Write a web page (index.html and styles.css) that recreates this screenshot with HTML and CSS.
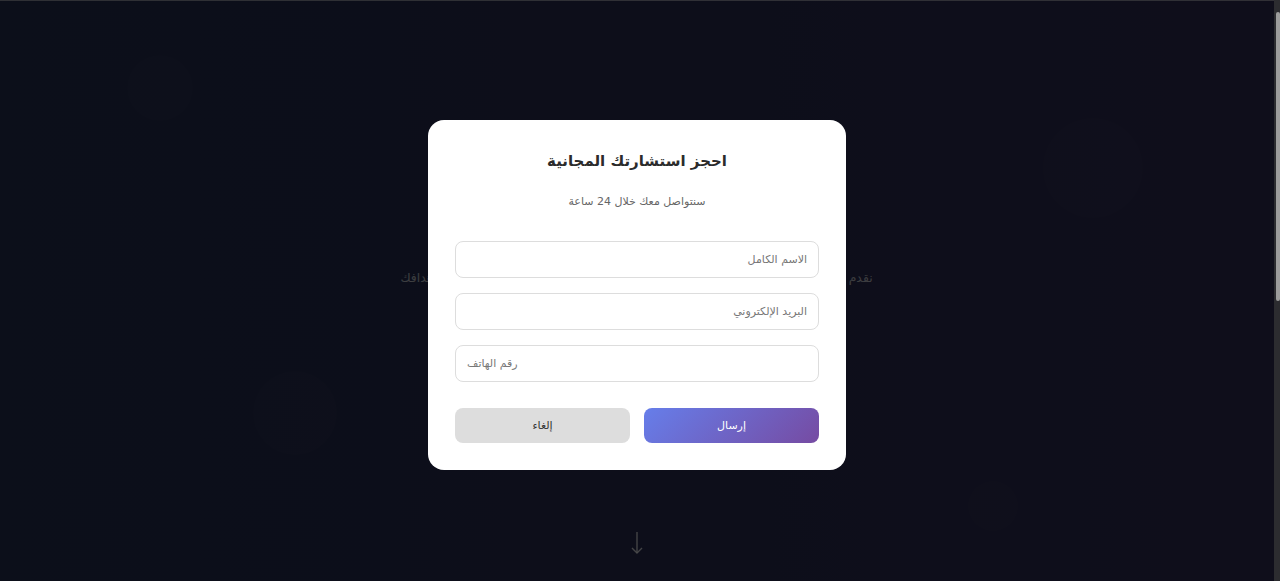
FILE: index.html
```html
<!DOCTYPE html>
<html lang="ar" dir="rtl">
<head>
    <meta charset="UTF-8">
    <meta name="viewport" content="width=device-width, initial-scale=1.0">
    <title>احجز استشارتك المجانية</title>
    <link rel="stylesheet" href="styles.css">
</head>
<body>
    <section class="hero">
        <span class="orb orb-1"></span>
        <span class="orb orb-2"></span>
        <span class="orb orb-3"></span>
        <span class="orb orb-4"></span>

        <div class="hero-content">
            <h1>حلول رقمية لأعمالك</h1>
            <p>نقدم لك حلولاً تقنية مبتكرة ومتكاملة تساعدك على تطوير أعمالك والنمو بثقة وتحقيق أهدافك</p>
        </div>

        <div class="scroll-hint">
            <svg width="14" height="24" viewBox="0 0 14 24" fill="none" stroke="currentColor" stroke-width="1.4">
                <line x1="7" y1="1" x2="7" y2="22"/>
                <polyline points="2,17 7,22 12,17"/>
            </svg>
        </div>
    </section>

    <section class="services"></section>

    <div class="modal-overlay">
        <div class="modal">
            <h2>احجز استشارتك المجانية</h2>
            <p class="modal-subtitle">سنتواصل معك خلال 24 ساعة</p>

            <form class="modal-form">
                <input type="text" placeholder="الاسم الكامل">
                <input type="email" placeholder="البريد الإلكتروني">
                <input type="tel" class="phone" placeholder="رقم الهاتف">

                <div class="modal-actions">
                    <button type="submit" class="btn btn-submit">إرسال</button>
                    <button type="button" class="btn btn-cancel">إلغاء</button>
                </div>
            </form>
        </div>
    </div>

    <div class="page-scroll"><span class="page-scroll-thumb"></span></div>
</body>
</html>
```

FILE: styles.css
```css
* {
    box-sizing: border-box;
}

html {
    background: #283257;
}

body {
    margin: 0;
    font-family: "Segoe UI", Tahoma, "DejaVu Sans", sans-serif;
    color: #fff;
}

.hero {
    position: relative;
    height: 581px;
    border-top: 1px solid rgba(255, 255, 255, 0.55);
    background: linear-gradient(90deg, #283257 0%, #2e3059 60%, #33305c 100%);
    display: flex;
    flex-direction: column;
    align-items: center;
    justify-content: center;
    overflow: hidden;
}

.orb {
    position: absolute;
    border-radius: 50%;
    background: rgba(255, 255, 255, 0.02);
}

.orb-1 { width: 66px; height: 66px; left: 127px; top: 54px; }
.orb-2 { width: 84px; height: 84px; left: 253px; top: 370px; }
.orb-3 { width: 100px; height: 100px; left: 1043px; top: 117px; }
.orb-4 { width: 50px; height: 50px; left: 968px; top: 480px; }

.hero-content {
    text-align: center;
    margin-top: -80px;
    margin-right: 7px;
}

.hero-content h1 {
    margin: 0 0 18px;
    font-size: 30px;
}

.hero-content p {
    margin: 0;
    font-size: 12.4px;
    white-space: nowrap;
    color: rgba(255, 255, 255, 0.75);
}

.scroll-hint {
    position: absolute;
    bottom: 22px;
    left: 630px;
    color: rgba(255, 255, 255, 0.85);
}

.services {
    height: 560px;
    background: linear-gradient(90deg, #2e3a5a 0%, #32304f 70%, #3e2f4a 100%);
}

.modal-overlay {
    position: fixed;
    top: 0;
    bottom: 0;
    left: 0;
    right: 6px;
    padding-top: 9px;
    background: rgba(0, 0, 0, 0.7);
    display: flex;
    align-items: center;
    justify-content: center;
}

.modal {
    width: 418px;
    padding: 27px;
    background: #fff;
    border-radius: 16px;
    text-align: center;
    color: #333;
}

.modal h2 {
    margin: 0 0 17px;
    font-size: 15px;
    line-height: 28px;
    font-weight: 700;
    color: #2b2b2b;
}

.modal-subtitle {
    margin: 0 0 29px;
    font-size: 11px;
    line-height: 20px;
    color: #666;
}

.modal-form {
    display: flex;
    flex-direction: column;
    gap: 15px;
}

.modal-form input {
    height: 37px;
    padding: 0 11px;
    border: 1.5px solid #ddd;
    border-radius: 8px;
    font-family: inherit;
    font-size: 11px;
    color: #333;
    background: #fff;
}

.modal-form input::placeholder {
    color: #777;
}

.modal-form .phone {
    direction: ltr;
    text-align: left;
}

.modal-actions {
    display: flex;
    gap: 14px;
    margin-top: 11px;
}

.btn {
    flex: 1;
    height: 35px;
    border: none;
    border-radius: 8px;
    font-family: inherit;
    font-size: 11px;
    cursor: pointer;
}

.btn-submit {
    background: linear-gradient(135deg, #667eea 0%, #764ba2 100%);
    color: #fff;
}

.btn-cancel {
    background: #ddd;
    color: #333;
}

/* stand-in for the browser scrollbar, hidden in headless mode */
.page-scroll {
    position: fixed;
    top: 0;
    right: 0;
    bottom: 0;
    width: 6px;
    padding: 12px 0 280px 2px;
    background: #2c2c30;
}

.page-scroll-thumb {
    display: block;
    height: 100%;
    border-radius: 2px;
    background: #9c9c9c;
}
```
